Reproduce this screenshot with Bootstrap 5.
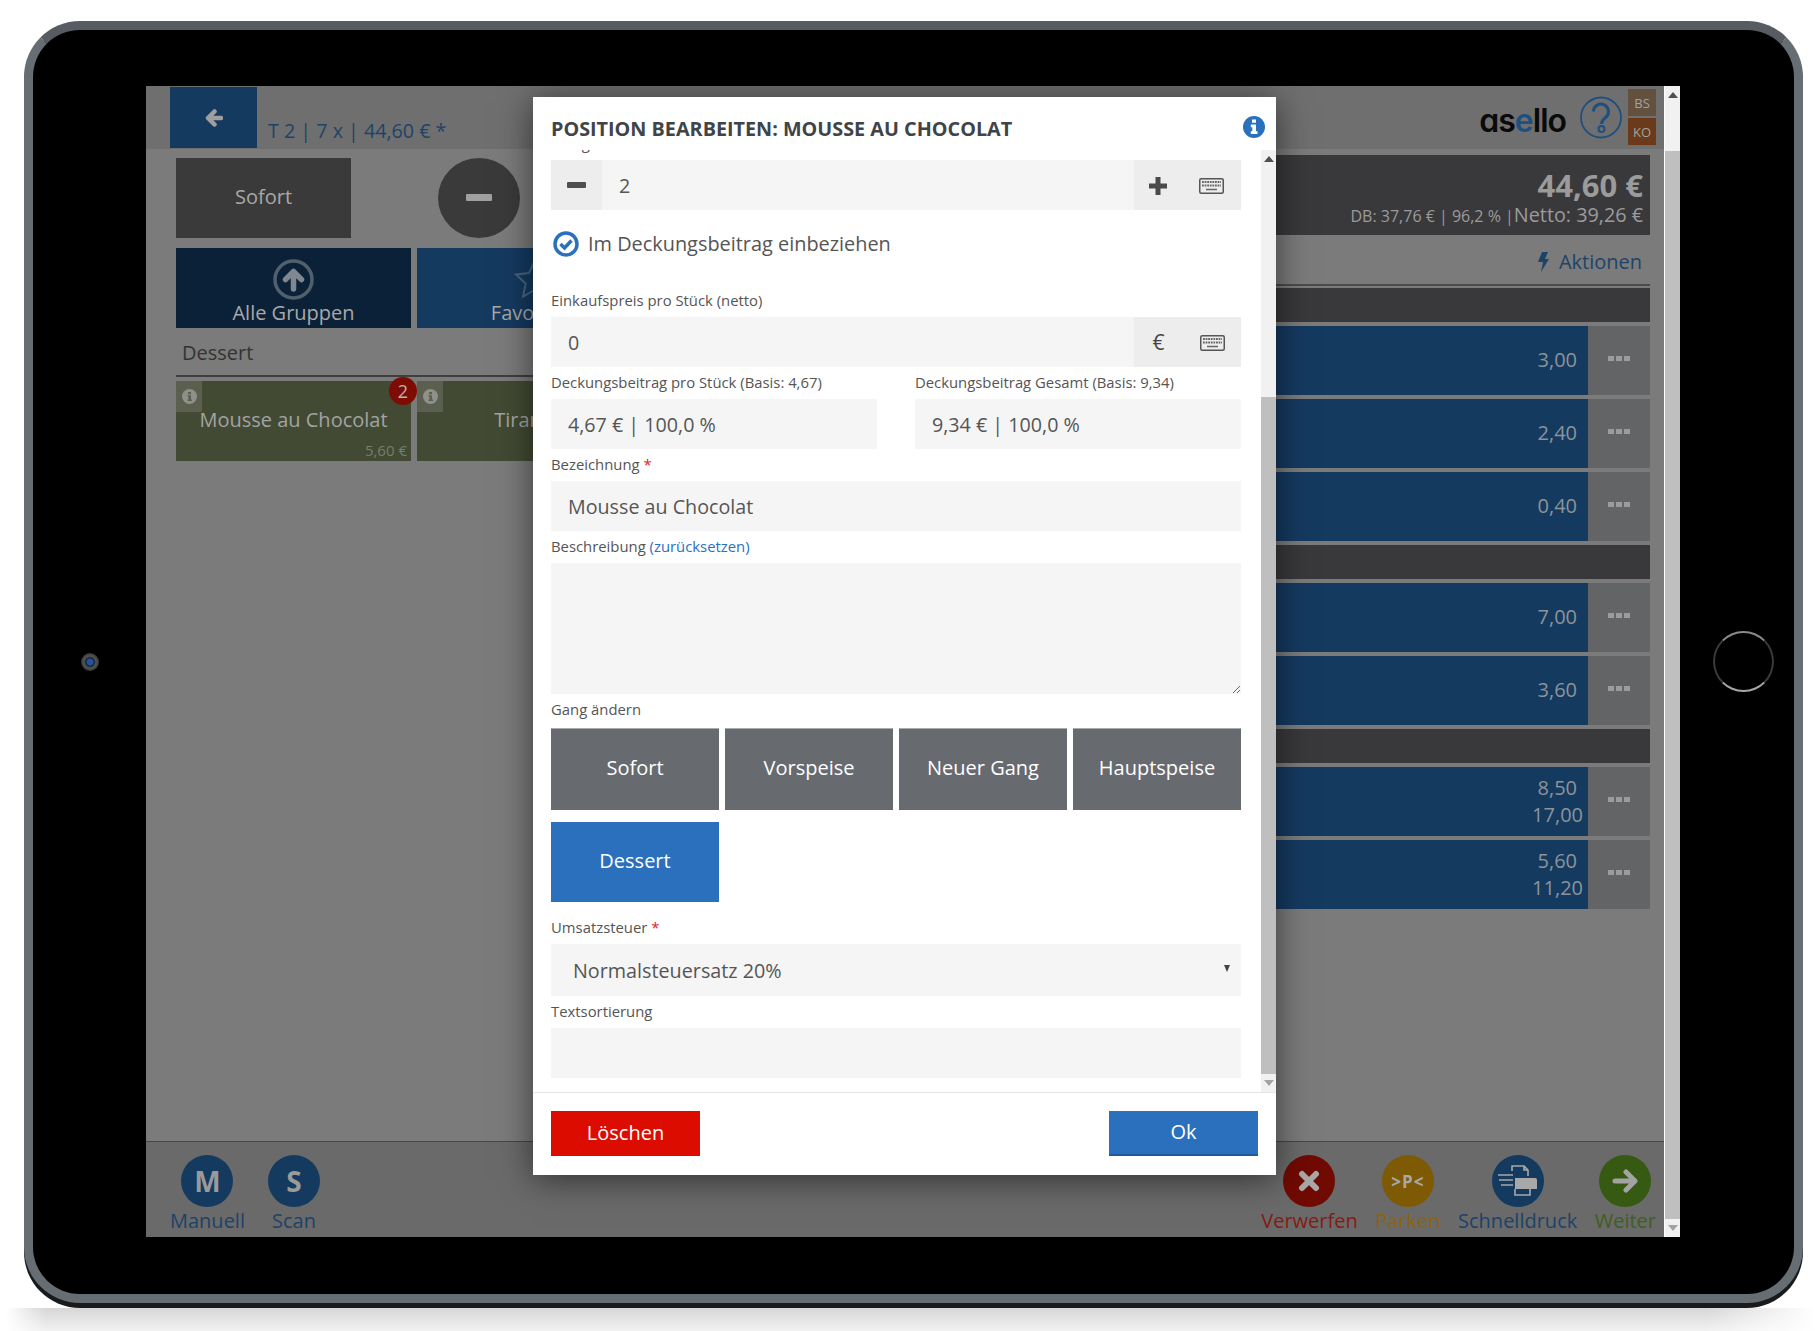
<!DOCTYPE html>
<html lang="de">
<head>
    <meta charset="UTF-8">
    <meta name="viewport" content="width=device-width, initial-scale=1.0">
    <title>Position bearbeiten</title>
    <link href="https://cdn.jsdelivr.net/npm/bootstrap@5.3.0/dist/css/bootstrap.min.css" rel="stylesheet">
    <style>
        body { background: #fff; font-family: "Open Sans", "Liberation Sans", sans-serif; color: #555; overflow: hidden; }
        .page { width: 1815px; height: 1331px; padding: 21px 0 0 24px; overflow: hidden; }
        .tablet { width: 1779px; height: 1282px; background: #000; border: 9px solid #666d73; border-top-color: #565c61; border-radius: 56px; box-shadow: 0 5px 0 #181a1c; }
        .bezel-side { width: 113px; height: 1151px; }
        .bezel-side.home-side { width: 114px; padding-left: 12px; }
        .tablet-inner { padding-top: 56px; height: 1264px; }
        .cam { width: 18px; height: 18px; border-radius: 50%; background: radial-gradient(circle, #24509c 0 3px, #123 4px, #555 6px, #333 9px); }
        .home-btn { width: 61px; height: 61px; border-radius: 50%; border: 2px solid #3a3a3a; border-top-color: #8a8a8a; border-bottom-color: #a8a8a8; }
        .floor { height: 23px; width: 1809px; margin: 5px 0 0 -18px; background: linear-gradient(to right, #fff 0, rgba(255,255,255,0) 40px, rgba(255,255,255,0) 1700px, #fff 1809px), linear-gradient(to bottom, #d6d6d6, #f2f2f2); }
        .screen { width: 1534px; height: 1151px; position: relative; }
        .app { width: 1518px; background: #7b7b7b; }
        .pagebar { width: 16px; background: #f1f1f1; border-left: 1px solid #fff; }
        .pagebar-thumb { background: #bfbfbf; flex-grow: 1; }
        .pagebar-btn { height: 18px; }
        .pagebar-top { height: 65px; }
        .arr-up { width: 0; height: 0; border-left: 5px solid transparent; border-right: 5px solid transparent; border-bottom: 6px solid #505050; margin: 6px auto 0; }
        .arr-down { width: 0; height: 0; border-left: 5px solid transparent; border-right: 5px solid transparent; border-top: 6px solid #a3a3a3; margin: 6px auto 0; }

        .topbar { height: 63px; background: #6f6f6f; padding-left: 24px; padding-right: 8px; }
        .back-btn { width: 87px; height: 61px; margin-top: 1px; background: #153a60; }
        .order-title { margin-left: 11px; padding-top: 30px; font-size: 19.7px; line-height: 30px; color: #1d4468; }
        .logo-word { font-family: Inter, "Open Sans", sans-serif; font-feature-settings: "cv11"; font-weight: 600; font-size: 32px; letter-spacing: -1px; line-height: 40px; color: #0a0a0a; margin-top: 15px; }
        .logo-word span { color: #1f4f80; }
        .help-ico { margin: 10px 6px 0 14px; }
        .user-stack { width: 28px; padding-top: 3px; gap: 2px; }
        .user-tag { height: 27px; font-size: 13px; line-height: 29px; text-align: center; color: #a3a3a3; }
        .tag-bs { background: #63503f; }
        .tag-ko { background: #6b3a1a; height: 27px; }

        .main-area { flex-grow: 1; }
        .left-col { padding-left: 30px; width: 854px; }
        .right-col { width: 650px; }
        .gang-cur { width: 175px; height: 80px; margin-top: 9px; padding-bottom: 2px; background: #3a3a3b; color: #a8a8a8; font-size: 20px; }
        .minus-round { width: 82px; height: 80px; margin: 9px 0 0 87px; padding-bottom: 2px; border-radius: 50%; background: #3a3a3b; }
        .minus-bar { width: 26px; height: 7px; background: #a0a0a0; border-radius: 1px; }
        .group-row { gap: 6px; margin-top: 10px; }
        .group-tile { width: 235px; height: 80px; padding-top: 11px; font-size: 20px; line-height: 25px; color: #a8a8a8; background: #153a60; }
        .group-tile.tile-dark { background: #0b2138; }
        .section-head { height: 49px; padding: 11px 0 0 6px; font-size: 20px; line-height: 28px; color: #333; border-bottom: 2px solid #3f3f3f; }
        .item-row { gap: 6px; margin-top: 4px; }
        .item-tile { width: 235px; height: 80px; position: relative; padding-bottom: 2px; background: #424a33; color: #a3a3a3; font-size: 20px; }
        .item-info { position: absolute; left: 0; top: 0; width: 26px; height: 31px; background: #5a5f50; }
        .item-badge { position: absolute; right: -6px; top: -4px; width: 28px; height: 28px; border-radius: 50%; background: #7e0c04; color: #b5b5b5; font-size: 18px; line-height: 28px; text-align: center; }
        .item-price { position: absolute; right: 4px; bottom: 1px; font-size: 15px; line-height: 20px; color: #787d68; }

        .sum-box { height: 80px; margin-top: 6px; padding: 13px 7px 0 0; background: #39393b; color: #9b9b9b; text-align: right; }
        .sum-big { font-size: 31px; font-weight: 700; line-height: 34px; }
        .sum-small { font-size: 16px; line-height: 25px; white-space: nowrap; }
        .sum-small b { font-weight: 400; font-size: 19.8px; }
        .actions-line { height: 51px; padding: 13px 8px 0 0; font-size: 20px; line-height: 28px; color: #1d4468; border-bottom: 2px solid #4b4b4b; gap: 10px; }
        .pos-list { gap: 4px; margin-top: 2px; }
        .pos-head { height: 34px; background: #39393b; }
        .pos-row { height: 69px; }
        .pos-main { flex-grow: 1; background: #153a60; padding: 0 11px 2px 0; font-size: 20px; line-height: 27px; color: #8c939a; text-align: right; }
        .pos-main span { display: block; }
        .pos-main .sum-line { margin-right: -6px; }
        .pos-more { width: 62px; background: #636466; gap: 2px; padding-bottom: 4px; }
        .pos-more i { width: 6px; height: 5px; background: #9c9c9c; display: block; }

        .bottombar { height: 96px; background: #6a6a6a; border-top: 1px solid #474747; padding: 13px 8px 0 24px; }
        .tool-group { gap: 23px; }
        .tool-group.tg-right { gap: 17.500px; }
        .tool-item { font-size: 20px; line-height: 27px; white-space: nowrap; }
        .tool-round { width: 52px; height: 52px; border-radius: 50%; color: #9a9a9a; font-weight: 700; font-size: 28px; }
        .tc-blue { color: #1c4268; } .tc-blue .tool-round { background: #153a60; }
        .tc-red { color: #871a14; } .tc-red .tool-round { background: #700a03; }
        .tc-orange { color: #8a6410; } .tc-orange .tool-round { background: #7f5a05; }
        .tc-green { color: #3f5f1e; } .tc-green .tool-round { background: #365a12; }
        .tool-round.park-txt { font-size: 17px; letter-spacing: 1px; color: #a8a8a8; }

        .edit-modal { position: absolute; left: 387px; top: 11px; width: 743px; height: 1078px; background: #fff; box-shadow: 0 4px 32px rgba(0,0,0,.55); }
        .edit-head { height: 53px; padding: 18px 11px 0 18px; }
        .edit-title { font-size: 19.8px; line-height: 28px; font-weight: 700; color: #3f4448; text-transform: uppercase; margin: 0; white-space: nowrap; }
        .edit-info { margin-top: 1px; }
        .edit-mid { height: 942px; }
        .edit-scroll { width: 728px; overflow: hidden; padding: 0 20px 0 18px; }
        .edit-inner { margin-top: -22px; }
        .field-lbl { display: block; height: 32px; margin: 0; font-size: 14.85px; line-height: 30px; color: #555; white-space: nowrap; }
        .field-lbl em { color: #e02020; font-style: normal; }
        .field-lbl a { color: #2a70bd; text-decoration: none; }
        .field-box { height: 50px; padding: 0 17px; background: #f5f5f5; border: 0; border-radius: 0; font-size: 19.7px; line-height: 52px; color: #555; }
        .field-area { height: 131px; background: #f5f5f5; border: 0; border-radius: 0; }
        .addon-part { background: #ededed; color: #444; }
        .addon-left { width: 51px; }
        .addon-right { width: 107px; height: 50px; padding: 2px 0 0 14px; gap: 31px; font-size: 21px; }
        .addon-right .euro { width: 21px; text-align: center; }
        .check-line { height: 75px; padding: 21px 0 0 2px; gap: 9px; font-size: 19.9px; line-height: 26px; color: #555; }
        .two-col { gap: 38px; }
        .two-col > div { width: 326px; }
        .gang-lbl { height: 34px; }
        .gang-grid { display: grid; grid-template-columns: repeat(4, 168px); column-gap: 6px; row-gap: 12px; }
        .gang-btn { height: 82px; padding: 0 0 3px; border: 0; border-top: 1px solid #aaa; border-radius: 0; background: #676a6f; color: #fff; font-size: 20px; }
        .gang-btn.gang-on { height: 80px; border-top: 0; background: #2a70bd; }
        .tax-lbl { margin-top: 10px; }
        .tax-box { height: 52px; padding: 0 11px 0 22px; font-size: 19.75px; line-height: 54px; }
        .tax-arrow { width: 0; height: 0; margin-top: 21px; border-left: 3px solid transparent; border-right: 3px solid transparent; border-top: 7px solid #444; }
        .inner-bar { width: 15px; background: #f1f1f1; }
        .inner-top { height: 247px; }
        .edit-foot { height: 83px; border-top: 1px solid #e5e5e5; padding: 18px 18px 0; }
        .foot-btn { width: 149px; height: 45px; padding: 0 0 2px; border: 0; border-radius: 0; color: #fff; font-size: 20px; }
        .foot-del { background: #dd0c00; }
        .foot-ok { background: #2a70bd; border-bottom: 2px solid #205a9c; }
    </style>
</head>
<body>
<div class="page">
    <div class="tablet">
        <div class="tablet-inner d-flex">
            <div class="bezel-side d-flex align-items-center justify-content-center"><div class="cam"></div></div>

            <div class="screen d-flex">
                <div class="app d-flex flex-column">
                    <div class="topbar d-flex">
                        <div class="back-btn d-flex align-items-center justify-content-center">
                            <svg width="18" height="18" viewBox="0 0 18 18"><path d="M9.5 2.5 3 9l6.500 6.500M4 9h12" fill="none" stroke="#9f9f9f" stroke-width="4.500" stroke-linecap="round" stroke-linejoin="round"/></svg>
                        </div>
                        <div class="order-title flex-grow-1">T 2 | 7 x | 44,60 € *</div>
                        <div class="logo-word">as<span>e</span>llo</div>
                        <svg class="help-ico" width="42" height="43" viewBox="0 0 42 43" fill="none" stroke="#1f4f80" stroke-width="1.800">
                            <circle cx="21" cy="21.500" r="20"/>
                            <path d="M13.500 15.500a7.500 7.500 0 1 1 12 6c-2.500 2-4 3-4 6.500" stroke-width="3"/>
                            <circle cx="21.500" cy="33" r="3" stroke-width="2"/>
                        </svg>
                        <div class="user-stack d-flex flex-column">
                            <div class="user-tag tag-bs">BS</div>
                            <div class="user-tag tag-ko">KO</div>
                        </div>
                    </div>

                    <div class="main-area d-flex">
                        <div class="left-col">
                            <div class="d-flex">
                                <div class="gang-cur d-flex align-items-center justify-content-center">Sofort</div>
                                <div class="minus-round d-flex align-items-center justify-content-center"><div class="minus-bar"></div></div>
                            </div>
                            <div class="group-row d-flex">
                                <div class="group-tile tile-dark d-flex flex-column align-items-center">
                                    <svg width="41" height="41" viewBox="0 0 41 41"><circle cx="20.500" cy="20.500" r="18.500" fill="none" stroke="#50606f" stroke-width="3.500"/><path d="M20.500 30V13M12.500 20.500l8-8 8 8" fill="none" stroke="#7f8891" stroke-width="5.500" stroke-linecap="round" stroke-linejoin="round"/></svg>
                                    <span>Alle Gruppen</span>
                                </div>
                                <div class="group-tile d-flex flex-column align-items-center">
                                    <svg width="41" height="41" viewBox="0 0 41 41"><path d="M20.500 2l5.500 12 13 1.500-9.700 9 2.700 13-11.500-6.500L9 37.500l2.700-13-9.700-9 13-1.500z" fill="none" stroke="#4a6580" stroke-width="2"/></svg>
                                    <span>Favoriten</span>
                                </div>
                            </div>
                            <div class="section-head">Dessert</div>
                            <div class="item-row d-flex">
                                <div class="item-tile d-flex align-items-center justify-content-center">
                                    <div class="item-info d-flex align-items-center justify-content-center"><svg width="15" height="15" viewBox="0 0 15 15"><circle cx="7.500" cy="7.500" r="7.500" fill="#8f9189"/><path d="M6 3h3v2.200H6zM5.500 6.300H9v4.200h1V12H5.500v-1.500h1V7.800h-1z" fill="#5a5f50"/></svg></div>
                                    Mousse au Chocolat
                                    <div class="item-badge">2</div>
                                    <div class="item-price">5,60 €</div>
                                </div>
                                <div class="item-tile d-flex align-items-center justify-content-center">
                                    <div class="item-info d-flex align-items-center justify-content-center"><svg width="15" height="15" viewBox="0 0 15 15"><circle cx="7.500" cy="7.500" r="7.500" fill="#8f9189"/><path d="M6 3h3v2.200H6zM5.500 6.300H9v4.200h1V12H5.500v-1.500h1V7.800h-1z" fill="#5a5f50"/></svg></div>
                                    Tiramisu
                                </div>
                            </div>
                        </div>

                        <div class="right-col">
                            <div class="sum-box">
                                <div class="sum-big">44,60 €</div>
                                <div class="sum-small">DB: 37,76 € | 96,2 % |<b>Netto: 39,26 €</b></div>
                            </div>
                            <div class="actions-line d-flex justify-content-end">
                                <svg class="mt-1" width="11" height="20" viewBox="0 0 11 20"><path d="M4 0h6L7 7h4L3 20l2-10H0z" fill="#1d4468"/></svg>
                                <span>Aktionen</span>
                            </div>
                            <div class="pos-list d-flex flex-column">
                                <div class="pos-head"></div>
                                <div class="pos-row d-flex"><div class="pos-main d-flex align-items-center justify-content-end">3,00</div><div class="pos-more d-flex align-items-center justify-content-center"><i></i><i></i><i></i></div></div>
                                <div class="pos-row d-flex"><div class="pos-main d-flex align-items-center justify-content-end">2,40</div><div class="pos-more d-flex align-items-center justify-content-center"><i></i><i></i><i></i></div></div>
                                <div class="pos-row d-flex"><div class="pos-main d-flex align-items-center justify-content-end">0,40</div><div class="pos-more d-flex align-items-center justify-content-center"><i></i><i></i><i></i></div></div>
                                <div class="pos-head"></div>
                                <div class="pos-row d-flex"><div class="pos-main d-flex align-items-center justify-content-end">7,00</div><div class="pos-more d-flex align-items-center justify-content-center"><i></i><i></i><i></i></div></div>
                                <div class="pos-row d-flex"><div class="pos-main d-flex align-items-center justify-content-end">3,60</div><div class="pos-more d-flex align-items-center justify-content-center"><i></i><i></i><i></i></div></div>
                                <div class="pos-head"></div>
                                <div class="pos-row d-flex"><div class="pos-main d-flex flex-column justify-content-center"><span>8,50</span><span class="sum-line">17,00</span></div><div class="pos-more d-flex align-items-center justify-content-center"><i></i><i></i><i></i></div></div>
                                <div class="pos-row d-flex"><div class="pos-main d-flex flex-column justify-content-center"><span>5,60</span><span class="sum-line">11,20</span></div><div class="pos-more d-flex align-items-center justify-content-center"><i></i><i></i><i></i></div></div>
                            </div>
                        </div>
                    </div>

                    <div class="bottombar d-flex justify-content-between">
                        <div class="tool-group d-flex">
                            <div class="tool-item tc-blue d-flex flex-column align-items-center"><div class="tool-round d-flex align-items-center justify-content-center">M</div>Manuell</div>
                            <div class="tool-item tc-blue d-flex flex-column align-items-center"><div class="tool-round d-flex align-items-center justify-content-center">S</div>Scan</div>
                        </div>
                        <div class="tool-group tg-right d-flex">
                            <div class="tool-item tc-red d-flex flex-column align-items-center">
                                <div class="tool-round d-flex align-items-center justify-content-center"><svg width="22" height="22" viewBox="0 0 22 22"><path d="M4 4l14 14M18 4L4 18" stroke="#a8a8a8" stroke-width="6" stroke-linecap="round"/></svg></div>
                                Verwerfen
                            </div>
                            <div class="tool-item tc-orange d-flex flex-column align-items-center"><div class="tool-round park-txt d-flex align-items-center justify-content-center">&gt;P&lt;</div>Parken</div>
                            <div class="tool-item tc-blue d-flex flex-column align-items-center">
                                <div class="tool-round d-flex align-items-center justify-content-center">
                                    <svg width="52" height="52" viewBox="0 0 52 52" fill="none" stroke="#a8a8a8" stroke-width="1.600"><path d="M6 20h15M7 25h14M9 30h12M20 16v-5h12l4 4v6M32 11v4h4M23 34v6h15v-6"/><path d="M23 23h20a2 2 0 0 1 2 2v9H23z" fill="#a8a8a8" stroke="none"/></svg>
                                </div>
                                Schnelldruck
                            </div>
                            <div class="tool-item tc-green d-flex flex-column align-items-center">
                                <div class="tool-round d-flex align-items-center justify-content-center"><svg width="26" height="24" viewBox="0 0 26 24"><path d="M14 3l9 9-9 9M22 12H3" fill="none" stroke="#a3a3a3" stroke-width="5" stroke-linecap="round" stroke-linejoin="round"/></svg></div>
                                Weiter
                            </div>
                        </div>
                    </div>
                </div>

                <div class="pagebar d-flex flex-column">
                    <div class="pagebar-top"><div class="arr-up"></div></div>
                    <div class="pagebar-thumb"></div>
                    <div class="pagebar-btn"><div class="arr-down"></div></div>
                </div>

                <div class="edit-modal d-flex flex-column">
                    <div class="edit-head d-flex justify-content-between">
                        <h5 class="edit-title">Position bearbeiten: Mousse au Chocolat</h5>
                        <svg class="edit-info" width="22" height="22" viewBox="0 0 22 22"><circle cx="11" cy="11" r="11" fill="#2a70bd"/><path d="M9 3.500h4v3.300H9zM7.800 8.500H13v6.700h1.500V18H7.800v-2.800h1.500v-3.900H7.800z" fill="#fff"/></svg>
                    </div>
                    <div class="edit-mid d-flex">
                        <div class="edit-scroll">
                            <div class="edit-inner">
                                <label class="field-lbl">Menge</label>
                                <div class="d-flex">
                                    <div class="addon-part addon-left d-flex align-items-center justify-content-center"><svg width="19" height="6" viewBox="0 0 19 6"><rect width="19" height="6" rx="1" fill="#4f4f4f"/></svg></div>
                                    <div class="field-box flex-grow-1">2</div>
                                    <div class="addon-part addon-right d-flex align-items-center">
                                        <svg width="20" height="20" viewBox="0 0 20 20"><path d="M10 1v18M1 10h18" stroke="#4a4a4a" stroke-width="5"/></svg>
                                        <svg width="25" height="16" viewBox="0 0 25 16" fill="none"><rect x=".75" y=".75" width="23.500" height="14.500" rx="1.500" stroke="#555" stroke-width="1.500"/><path d="M3 4h19M3 7.500h19" stroke="#666" stroke-width="2" stroke-dasharray="1.800 .8"/><path d="M7 11.500h11" stroke="#666" stroke-width="1.500"/></svg>
                                    </div>
                                </div>
                                <div class="check-line d-flex align-items-start">
                                    <svg width="26" height="26" viewBox="0 0 26 26"><circle cx="13" cy="13" r="11" fill="none" stroke="#2a70bd" stroke-width="3.500"/><path d="M7.500 13l4 4 7-7.500" fill="none" stroke="#2a70bd" stroke-width="3.500"/></svg>
                                    <span>Im Deckungsbeitrag einbeziehen</span>
                                </div>
                                <label class="field-lbl">Einkaufspreis pro Stück (netto)</label>
                                <div class="d-flex">
                                    <div class="field-box flex-grow-1">0</div>
                                    <div class="addon-part addon-right d-flex align-items-center">
                                        <span class="euro">€</span>
                                        <svg width="25" height="16" viewBox="0 0 25 16" fill="none"><rect x=".75" y=".75" width="23.500" height="14.500" rx="1.500" stroke="#555" stroke-width="1.500"/><path d="M3 4h19M3 7.500h19" stroke="#666" stroke-width="2" stroke-dasharray="1.800 .8"/><path d="M7 11.500h11" stroke="#666" stroke-width="1.500"/></svg>
                                    </div>
                                </div>
                                <div class="two-col d-flex">
                                    <div>
                                        <label class="field-lbl">Deckungsbeitrag pro Stück (Basis: 4,67)</label>
                                        <div class="field-box">4,67 € | 100,0 %</div>
                                    </div>
                                    <div>
                                        <label class="field-lbl">Deckungsbeitrag Gesamt (Basis: 9,34)</label>
                                        <div class="field-box">9,34 € | 100,0 %</div>
                                    </div>
                                </div>
                                <label class="field-lbl">Bezeichnung <em>*</em></label>
                                <div class="field-box">Mousse au Chocolat</div>
                                <label class="field-lbl">Beschreibung <a href="#">(zurücksetzen)</a></label>
                                <textarea class="form-control field-area"></textarea>
                                <label class="field-lbl gang-lbl">Gang ändern</label>
                                <div class="gang-grid">
                                    <button type="button" class="btn gang-btn">Sofort</button>
                                    <button type="button" class="btn gang-btn">Vorspeise</button>
                                    <button type="button" class="btn gang-btn">Neuer Gang</button>
                                    <button type="button" class="btn gang-btn">Hauptspeise</button>
                                    <button type="button" class="btn gang-btn gang-on">Dessert</button>
                                </div>
                                <label class="field-lbl tax-lbl">Umsatzsteuer <em>*</em></label>
                                <div class="field-box tax-box d-flex justify-content-between">
                                    <span>Normalsteuersatz 20%</span>
                                    <div class="tax-arrow"></div>
                                </div>
                                <label class="field-lbl">Textsortierung</label>
                                <div class="field-box"></div>
                            </div>
                        </div>
                        <div class="inner-bar d-flex flex-column">
                            <div class="inner-top"><div class="arr-up"></div></div>
                            <div class="pagebar-thumb"></div>
                            <div class="pagebar-btn"><div class="arr-down"></div></div>
                        </div>
                    </div>
                    <div class="edit-foot d-flex justify-content-between">
                        <button type="button" class="btn foot-btn foot-del">Löschen</button>
                        <button type="button" class="btn foot-btn foot-ok">Ok</button>
                    </div>
                </div>
            </div>

            <div class="bezel-side home-side d-flex align-items-center justify-content-center"><div class="home-btn"></div></div>
        </div>
    </div>
    <div class="floor"></div>
</div>
<script src="https://cdn.jsdelivr.net/npm/bootstrap@5.3.0/dist/js/bootstrap.bundle.min.js"></script>
</body>
</html>
